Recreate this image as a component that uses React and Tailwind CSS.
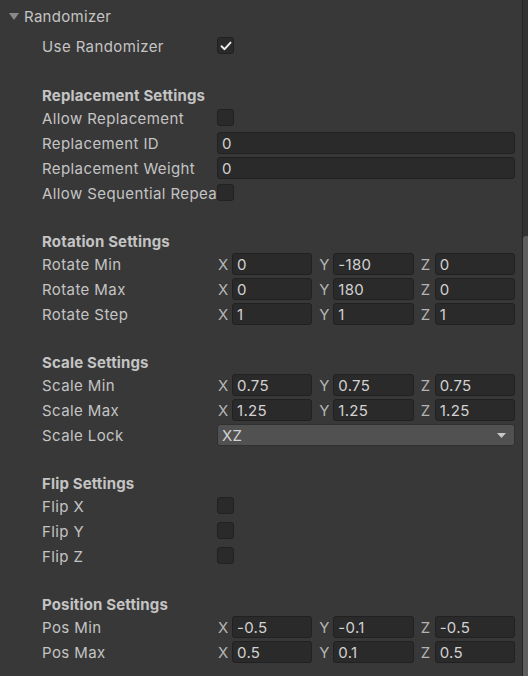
import React from 'react'

const font = { fontFamily: 'Inter, "Noto Sans", sans-serif' }

function Label({ children }) {
  return (
    <div className="w-[217px] shrink-0 pl-[42px] pr-[4px] pt-[2px] overflow-hidden whitespace-nowrap leading-[19px] tracking-[0.4px] text-[#c4c4c4]">
      {children}
    </div>
  )
}

function Row({ label, children }) {
  return (
    <div className="flex h-[25px] items-center">
      <Label>{label}</Label>
      <div className="flex-1 flex items-center pr-[7px]">{children}</div>
    </div>
  )
}

function Header({ children }) {
  return (
    <div className="h-[22px] flex items-center pt-[3px] pl-[42px] font-bold tracking-[0.15px] text-[#c4c4c4]">{children}</div>
  )
}

function Box({ checked }) {
  return (
    <div className="w-[17px] h-[17px] rounded-[3px] bg-[#2a2a2a] border border-[#212121] flex items-center justify-center">
      {checked && (
        <svg width="12" height="10" viewBox="0 0 12 10">
          <path d="M1.5 5.2 L4.6 8.2 L10.5 1.6" fill="none" stroke="#eeeeee" strokeWidth="1.9" strokeLinecap="round" strokeLinejoin="round" />
        </svg>
      )}
    </div>
  )
}

function Field({ value }) {
  return (
    <div className="flex-1 h-[22px] rounded-[3px] bg-[#2a2a2a] border border-[#212121] flex items-center pl-[4px] pt-[1px] text-[#d2d2d2] whitespace-nowrap">
      {value}
    </div>
  )
}

function Vec({ x, y, z }) {
  return (
    <div className="flex-1 grid grid-cols-3 gap-[6px]">
      {[['X', x], ['Y', y], ['Z', z]].map(([a, v]) => (
        <div key={a} className="flex items-center">
          <div className="w-[15px] shrink-0 pl-[1px] pt-[1px] text-[#b4b4b4]">{a}</div>
          <Field value={v} />
        </div>
      ))}
    </div>
  )
}

export default function App() {
  return (
    <div className="w-[528px] h-[676px] bg-[#383838] flex overflow-hidden text-[15px] leading-none tracking-[0.3px]" style={font}>
      <div className="flex-1 pt-[4px]">
        <div className="h-[24px] flex items-center pt-[1px] text-[#c4c4c4]">
          <svg className="ml-[9px] mr-[5px]" width="10" height="8" viewBox="0 0 10 8">
            <path d="M0 0 H10 L5 7 Z" fill="#8a8a8a" />
          </svg>
          Randomizer
        </div>

        <div className="mt-[5px]">
          <Row label="Use Randomizer"><Box checked /></Row>
        </div>

        <div className="mt-[25px]">
          <Header>Replacement Settings</Header>
          <Row label="Allow Replacement"><Box /></Row>
          <Row label="Replacement ID"><Field value="0" /></Row>
          <Row label="Replacement Weight"><Field value="0" /></Row>
          <Row label="Allow Sequential Repeats"><Box /></Row>
        </div>

        <div className="mt-[24px]">
          <Header>Rotation Settings</Header>
          <Row label="Rotate Min"><Vec x="0" y="-180" z="0" /></Row>
          <Row label="Rotate Max"><Vec x="0" y="180" z="0" /></Row>
          <Row label="Rotate Step"><Vec x="1" y="1" z="1" /></Row>
        </div>

        <div className="mt-[24px]">
          <Header>Scale Settings</Header>
          <Row label="Scale Min"><Vec x="0.75" y="0.75" z="0.75" /></Row>
          <Row label="Scale Max"><Vec x="1.25" y="1.25" z="1.25" /></Row>
          <Row label="Scale Lock">
            <div className="flex-1 h-[22px] rounded-[3px] bg-[#515151] border border-[#303030] flex items-center justify-between pl-[4px] pr-[8px] pt-[1px] text-[#d2d2d2]">
              XZ
              <svg width="9" height="5" viewBox="0 0 9 5">
                <path d="M0 0 H9 L4.5 5 Z" fill="#c8c8c8" />
              </svg>
            </div>
          </Row>
        </div>

        <div className="mt-[24px]">
          <Header>Flip Settings</Header>
          <Row label="Flip X"><Box /></Row>
          <Row label="Flip Y"><Box /></Row>
          <Row label="Flip Z"><Box /></Row>
        </div>

        <div className="mt-[24px]">
          <Header>Position Settings</Header>
          <Row label="Pos Min"><Vec x="-0.5" y="-0.1" z="-0.5" /></Row>
          <Row label="Pos Max"><Vec x="0.5" y="0.1" z="0.5" /></Row>
        </div>
      </div>

      <div className="w-[6px] flex flex-col border-l border-[#262626] bg-[#333333]">
        <div className="h-[236px]" />
        <div className="flex-1 bg-[#5f5f5f] rounded-tl-[3px]" />
      </div>
    </div>
  )
}
